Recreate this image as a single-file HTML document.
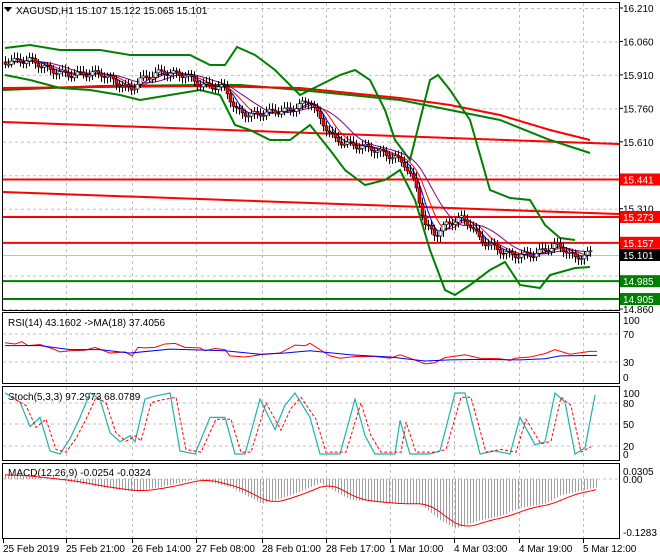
<!DOCTYPE html><html><head><meta charset="utf-8"><style>
body{margin:0;background:#fff;width:660px;height:560px;overflow:hidden}
svg{display:block;font-family:"Liberation Sans",sans-serif;font-size:10px}
</style></head><body>
<svg id="s" width="660" height="560" xmlns="http://www.w3.org/2000/svg">
<rect width="660" height="560" fill="#fff"/>
<g id="grid" stroke="#c0c0c0" stroke-dasharray="3,3" stroke-width="1"></g>
<g id="main"></g>
<g fill="none" stroke="#000" stroke-width="1">
<rect x="2.5" y="2.5" width="617" height="308"/>
<rect x="2.5" y="312.5" width="617" height="71"/>
<rect x="2.5" y="386.5" width="617" height="74"/>
<rect x="2.5" y="463.5" width="617" height="75"/>
</g>
<g id="ax" fill="#000"></g>
<text x="8" y="326">RSI(14) 43.1602  -&gt;MA(18) 37.4056</text>
<text x="8" y="400">Stoch(5,3,3) 97.2973 68.0789</text>
<text x="8" y="476">MACD(12,26,9) -0.0254 -0.0324</text>
<text x="16" y="14">XAGUSD,H1  15.107 15.122 15.065 15.101</text>
<path d="M4 7 L12 7 L8 12 Z" fill="#000"/>
</svg>
<script>
const S=document.getElementById('s'),NS='http://www.w3.org/2000/svg';
function el(t,a,p){const e=document.createElementNS(NS,t);for(const k in a)e.setAttribute(k,a[k]);(p||S).appendChild(e);return e}
function pl(pts,c,w,d){el('polyline',{points:pts.map(p=>p.join(',')).join(' '),fill:'none',stroke:c,'stroke-width':w||1,'stroke-dasharray':d||'none'})}
const G=document.getElementById('grid');
const vx=[66,132,196,262,326,390,454,519,583];
vx.forEach(x=>{el('line',{x1:x+.5,y1:3,x2:x+.5,y2:310},G);el('line',{x1:x+.5,y1:313,x2:x+.5,y2:383},G);el('line',{x1:x+.5,y1:387,x2:x+.5,y2:460},G);el('line',{x1:x+.5,y1:464,x2:x+.5,y2:538},G)});
const py=p=>8+(16.21-p)*223;
[16.21,16.06,15.91,15.76,15.61,15.46,15.31,15.16,15.01,14.86].forEach(p=>el('line',{x1:3,y1:py(p)+.5,x2:619,y2:py(p)+.5},G));
[334,362].forEach(y=>el('line',{x1:3,y1:y,x2:619,y2:y},G));
[403,424,446].forEach(y=>el('line',{x1:3,y1:y,x2:619,y2:y},G));
el('line',{x1:3,y1:479,x2:619,y2:479},G);
const A=document.getElementById('ax');
[16.21,16.06,15.91,15.76,15.61,15.31,14.86].forEach(p=>{el('line',{x1:619,y1:py(p),x2:623,y2:py(p),stroke:'#000'},A);el('text',{x:623,y:py(p)+4},A).textContent=p.toFixed(3)});
[['100',320],['70',334],['30',362],['0',377]].forEach(a=>el('text',{x:623,y:a[1]+4},A).textContent=a[0]);
[['100',393],['80',403],['50',424],['20',446],['0',454]].forEach(a=>el('text',{x:623,y:a[1]+4},A).textContent=a[0]);
[['0.0305',471],['0.00',479],['-0.1283',532]].forEach(a=>el('text',{x:623,y:a[1]+4},A).textContent=a[0]);
const tl=[[3,'25 Feb 2019'],[66,'25 Feb 21:00'],[132,'26 Feb 14:00'],[196,'27 Feb 08:00'],[262,'28 Feb 01:00'],[326,'28 Feb 17:00'],[390,'1 Mar 10:00'],[454,'4 Mar 03:00'],[519,'4 Mar 19:00'],[583,'5 Mar 12:00']];
tl.forEach(t=>{el('line',{x1:t[0]+.5,y1:539,x2:t[0]+.5,y2:543,stroke:'#000'},A);el('text',{x:t[0],y:552},A).textContent=t[1]});
[[15.441,'red'],[15.273,'red'],[15.157,'red'],[14.985,'green'],[14.905,'green']].forEach(l=>{const y=py(l[0]);const c=l[1]=='red'?'#f00':'#008000';el('line',{x1:3,y1:y,x2:619,y2:y,stroke:c,'stroke-width':2});el('rect',{x:620,y:y-6,width:40,height:12,fill:c});el('text',{x:623,y:y+4,fill:'#fff'}).textContent=l[0].toFixed(3)});
el('line',{x1:3,y1:255.5,x2:619,y2:255.5,stroke:'#c0c0c0'});
el('rect',{x:620,y:249,width:40,height:12,fill:'#000'});el('text',{x:623,y:259,fill:'#fff'}).textContent='15.101';
pl([[3,122],[590,143],[619,144]],'#f00',2);
pl([[3,192],[590,213],[619,214]],'#f00',2);
pl([[3,90],[100,86],[200,85],[240,85],[300,90],[350,95],[400,100],[450,110],[500,120],[550,140],[590,153]],'#008000',2);
pl([[3,88],[100,87],[200,86],[300,88],[400,98],[450,105],[500,115],[550,130],[590,140]],'#f00',2);
pl([[5,48],[30,45],[60,50],[100,50],[130,55],[160,55],[190,55],[210,65],[225,65],[237,47],[255,55],[275,70],[300,95],[320,85],[340,75],[355,70],[370,80],[385,110],[395,140],[410,160],[420,120],[430,80],[438,75],[450,90],[470,120],[490,190],[510,198],[530,200],[545,225],[560,238],[575,240]],'#008000',2);
pl([[5,75],[30,80],[60,88],[90,90],[120,95],[140,100],[170,95],[200,90],[220,95],[235,125],[250,130],[270,140],[290,140],[310,125],[330,150],[345,170],[365,185],[385,180],[400,170],[415,200],[430,250],[445,290],[455,295],[470,285],[490,270],[505,262],[520,285],[540,288],[550,275],[575,268],[590,267]],'#008000',2);
const P=[[5,62],[30,60],[50,70],[70,75],[100,73],[130,90],[140,80],[160,72],[185,75],[200,85],[225,88],[235,110],[250,115],[270,112],[290,110],[310,100],[320,120],[335,140],[350,145],[370,148],[395,158],[405,165],[415,185],[425,225],[435,235],[445,225],[460,218],[470,225],[480,240],[495,248],[510,255],[530,255],[545,250],[555,245],[565,250],[575,258],[590,253]];
function interp(x){for(let i=0;i<P.length-1;i++){if(x>=P[i][0]&&x<=P[i+1][0]){const t=(x-P[i][0])/(P[i+1][0]-P[i][0]);return P[i][1]+t*(P[i+1][1]-P[i][1])}}return P[P.length-1][1]}
const sm=(k,o)=>{const a=[];for(let x=5;x<=590;x+=3){let s=0,n=0;for(let j=0;j<k;j++){const xx=Math.max(5,x-j*3);s+=interp(xx);n++}a.push([x,s/n+o])}return a};
pl(sm(8,0),'#f00',1);pl(sm(5,0),'#00f',1);pl(sm(14,0),'#800080',1);
let prev=interp(5);
for(let x=5;x<=590;x+=3){const c=interp(x)+Math.sin(x*1.7)*3;const o=prev;const hi=Math.min(o,c)-3-Math.abs(Math.sin(x))*3,lo=Math.max(o,c)+3+Math.abs(Math.cos(x))*3;
el('line',{x1:x+.5,y1:hi,x2:x+.5,y2:lo,stroke:'#000'});el('rect',{x:x-1,y:Math.min(o,c),width:3,height:Math.max(1,Math.abs(c-o)),fill:c>o?'#f00':'#fff',stroke:'#000','stroke-width':.6});prev=c}
const ry=v=>377-v*0.57;
const rsiR=[[5,60],[15,58],[22,62],[28,55],[40,57],[55,48],[60,44],[70,46],[85,47],[95,52],[110,42],[125,44],[132,37],[138,52],[145,51],[155,52],[165,58],[175,59],[185,52],[200,51],[205,46],[215,50],[225,48],[230,37],[245,35],[260,39],[280,42],[295,56],[305,55],[310,59],[330,37],[340,33],[355,36],[375,36],[390,33],[400,39],[410,33],[425,23],[435,25],[445,34],[465,39],[480,33],[500,32],[510,29],[515,33],[530,35],[545,41],[555,48],[570,40],[590,45],[597,45]];
pl(rsiR.map(p=>[p[0],ry(p[1])]),'#f00',1);
pl([[5,55],[40,55],[70,48],[100,48],[130,42],[170,49],[225,46],[260,40],[285,42],[310,46],[350,39],[390,35],[425,28],[450,30],[480,31],[520,30],[545,32],[560,37],[597,38]].map(p=>[p[0],ry(p[1])]),'#00f',1);
const sy=v=>454-v*0.61;
const st=[[5,100],[20,85],[30,45],[40,60],[50,5],[60,0],[70,25],[80,60],[90,100],[100,90],[110,35],[120,20],[130,30],[135,20],[145,90],[155,95],[170,100],[180,5],[195,0],[210,60],[225,60],[235,0],[245,0],[260,90],[275,40],[285,80],[295,100],[310,60],[320,0],[340,0],[355,90],[365,30],[375,0],[395,0],[400,55],[410,0],[430,0],[440,5],[455,100],[465,100],[480,0],[495,5],[510,0],[520,60],[535,15],[545,20],[555,100],[565,85],[575,0],[585,10],[595,97]];
pl(st.map(p=>[p[0],sy(p[1])]),'#20b2aa',1.2);
pl(st.map(p=>[p[0]+6,sy(p[1]*0.9+3)]).filter(p=>p[0]<598),'#f00',1,'3,2');
const my=v=>479-v*413;
const mac=[[5,0.01],[30,0.005],[66,-0.005],[100,-0.02],[132,-0.03],[160,-0.02],[196,0.0],[230,-0.02],[262,-0.06],[290,-0.04],[320,-0.01],[350,-0.05],[390,-0.06],[420,-0.06],[440,-0.1],[455,-0.12],[480,-0.1],[500,-0.09],[520,-0.07],[545,-0.06],[560,-0.04],[597,-0.02]];
function mi(x){for(let i=0;i<mac.length-1;i++)if(x>=mac[i][0]&&x<=mac[i+1][0]){const t=(x-mac[i][0])/(mac[i+1][0]-mac[i][0]);return mac[i][1]+t*(mac[i+1][1]-mac[i][1])}return mac[mac.length-1][1]}
for(let x=5;x<=597;x+=3){const v=mi(x);el('line',{x1:x+.5,y1:my(0),x2:x+.5,y2:my(v),stroke:'#a0a0a0'})}
const sig=[];for(let x=5;x<=597;x+=3){let s=0;for(let j=0;j<5;j++)s+=mi(Math.max(5,x-j*5));sig.push([x,my(s/5)])}
pl(sig,'#f00',1);
</script>
</body></html>
